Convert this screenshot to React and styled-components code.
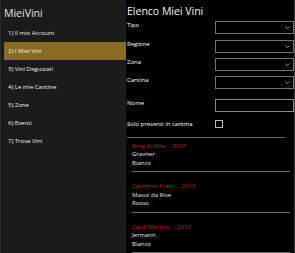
import styled, { createGlobalStyle } from 'styled-components';

const GlobalStyle = createGlobalStyle`
	html, body {
		margin: 0;
		padding: 0;
		background: #000;
	}
	* {
		box-sizing: border-box;
	}
`;

const menu = [
	'1) Il mio Account',
	'2) I Miei Vini',
	'3) Vini Degustati',
	'4) Le mie Cantine',
	'5) Zone',
	'6) Eventi',
	'7) Trova Vini',
];

const filters = [
	{ label: 'Tipo', h: 19 },
	{ label: 'Regione', h: 19 },
	{ label: 'Zona', h: 18 },
	{ label: 'Cantina', h: 23 },
];

const wines = [
	{ name: 'Breg Anfora', year: '2007', winery: 'Gravner', color: 'Bianco' },
	{ name: 'Cabernet Franc', year: '2013', winery: 'Masut da Rive', color: 'Rosso' },
	{ name: 'Capo Martino', year: '2012', winery: 'Jermann', color: 'Bianco' },
];

const Window = styled.div`
	display: flex;
	width: 295px;
	height: 253px;
	overflow: hidden;
	background: #000;
	font-family: 'Open Sans', 'Liberation Sans', sans-serif;
	color: #fff;
	border-right: 1px solid #3a3a3a;
	border-left: 1px solid #2c2c2c;
`;

const Sidebar = styled.nav`
	width: 125px;
	flex-shrink: 0;
	background: #1b1b1b;
	display: flex;
	flex-direction: column;
`;

const AppTitle = styled.div`
	height: 24px;
	padding: 7px 0 0 3px;
	font-size: 10.5px;
	line-height: 12px;
	color: #e4e4e4;
`;

const MenuItem = styled.div`
	height: 18px;
	margin-left: 3px;
	padding-left: 4px;
	display: flex;
	align-items: center;
	font-size: 6px;
	color: #f0f0f0;
	background: ${(p) => (p.$active ? '#8a6b22' : 'transparent')};
`;

const Main = styled.main`
	flex: 1;
	padding-left: 1px;
	display: flex;
	flex-direction: column;
`;

const PageTitle = styled.h1`
	margin: 0;
	height: 21px;
	padding-top: 5px;
	font-size: 10.5px;
	line-height: 13px;
	font-weight: 400;
	color: #f2f2f2;
`;

const FormRow = styled.div`
	display: flex;
	align-items: flex-start;
	height: ${(p) => p.$h}px;
`;

const Label = styled.span`
	width: 88px;
	font-size: 6px;
	line-height: 8px;
	color: #fff;
`;

const Select = styled.div`
	width: 79px;
	height: 13px;
	border: 1px solid #737373;
	display: flex;
	align-items: center;
	justify-content: flex-end;
	padding-right: 3px;
`;

const TextBox = styled.div`
	width: 79px;
	height: 13px;
	border: 1px solid #8a8a8a;
`;

const CheckBox = styled.div`
	width: 8px;
	height: 8px;
	border: 1px solid #bdbdbd;
`;

const Divider = styled.div`
	width: ${(p) => p.$w}px;
	height: 1px;
	background: #6a6a6a;
`;

const WineList = styled.div`
	padding-left: 5px;
	display: flex;
	flex-direction: column;
`;

const WineItem = styled.div`
	padding-top: 10px;
	&:first-child {
		padding-top: 4px;
	}
`;

const WineLines = styled.div`
	font-size: 6px;
	line-height: 8.5px;
	color: #e8e8e8;
	margin-bottom: 4px;
`;

const WineName = styled.div`
	color: #bc2020;
	span + span {
		margin-left: 7px;
	}
`;

const Chevron = () => (
	<svg width='5' height='3' viewBox='0 0 5 3'>
		<polyline points='0.5,0.5 2.5,2.5 4.5,0.5' fill='none' stroke='#9a9a9a' strokeWidth='0.8' />
	</svg>
);

export default function App() {
	return (
		<>
			<GlobalStyle />
			<Window>
				<Sidebar>
					<AppTitle>MieiVini</AppTitle>
					{menu.map((m, i) => (
						<MenuItem key={m} $active={i === 1}>
							{m}
						</MenuItem>
					))}
				</Sidebar>
				<Main>
					<PageTitle>Elenco Miei Vini</PageTitle>
					{filters.map((f) => (
						<FormRow key={f.label} $h={f.h}>
							<Label>{f.label}</Label>
							<Select>
								<Chevron />
							</Select>
						</FormRow>
					))}
					<FormRow $h={21}>
						<Label>Nome</Label>
						<TextBox />
					</FormRow>
					<FormRow $h={17}>
						<Label>Solo presenti in cantina</Label>
						<CheckBox />
					</FormRow>
					<Divider $w={158} />
					<WineList>
						{wines.map((w) => (
							<WineItem key={w.name}>
								<WineLines>
									<WineName>
										<span>{w.name}</span>
										<span>{w.year}</span>
									</WineName>
									<div>{w.winery}</div>
									<div>{w.color}</div>
								</WineLines>
								<Divider $w={158} />
							</WineItem>
						))}
					</WineList>
				</Main>
			</Window>
		</>
	);
}
